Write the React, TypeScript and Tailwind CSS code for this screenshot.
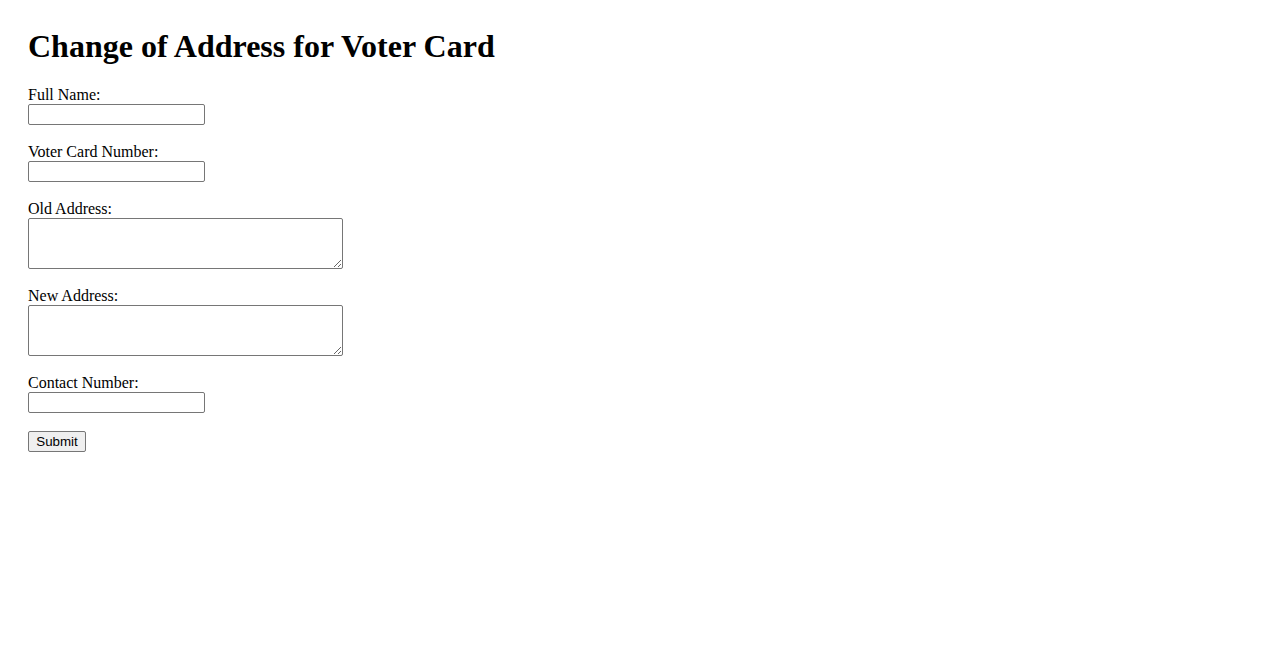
export default function App() {
  const serif = { fontFamily: '"Liberation Serif", "Times New Roman", serif' };
  return (
    <div className="min-h-screen bg-white p-[28px] text-black" style={serif}>
      <h1 className="mb-[21px] text-[32px] font-bold leading-[37px]">
        Change of Address for Voter Card
      </h1>
      <form className="flex flex-col items-start text-[16px]" onSubmit={(e) => e.preventDefault()}>
        <label htmlFor="name" className="block leading-[18px]">Full Name:</label>
        <input id="name" type="text" className="mb-[18px] h-[21px] w-[177px] rounded-[2px] border border-[#767676] bg-white px-[2px] text-[13px]" />

        <label htmlFor="voter" className="block leading-[18px]">Voter Card Number:</label>
        <input id="voter" type="text" className="mb-[18px] h-[21px] w-[177px] rounded-[2px] border border-[#767676] bg-white px-[2px] text-[13px]" />

        <label htmlFor="old" className="block leading-[18px]">Old Address:</label>
        <textarea id="old" className="mb-[18px] h-[51px] w-[315px] rounded-[2px] border border-[#767676] bg-white p-[2px] text-[13px]" />

        <label htmlFor="new" className="block leading-[18px]">New Address:</label>
        <textarea id="new" className="mb-[18px] h-[51px] w-[315px] rounded-[2px] border border-[#767676] bg-white p-[2px] text-[13px]" />

        <label htmlFor="contact" className="block leading-[18px]">Contact Number:</label>
        <input id="contact" type="text" className="mb-[18px] h-[21px] w-[177px] rounded-[2px] border border-[#767676] bg-white px-[2px] text-[13px]" />

        <button
          type="submit"
          className="h-[21px] w-[58px] rounded-[2px] border border-[#767676] bg-[#efefef] text-[13.33px] leading-none"
          style={{ fontFamily: '"Liberation Sans", Arial, sans-serif' }}
        >
          Submit
        </button>
      </form>
    </div>
  );
}
